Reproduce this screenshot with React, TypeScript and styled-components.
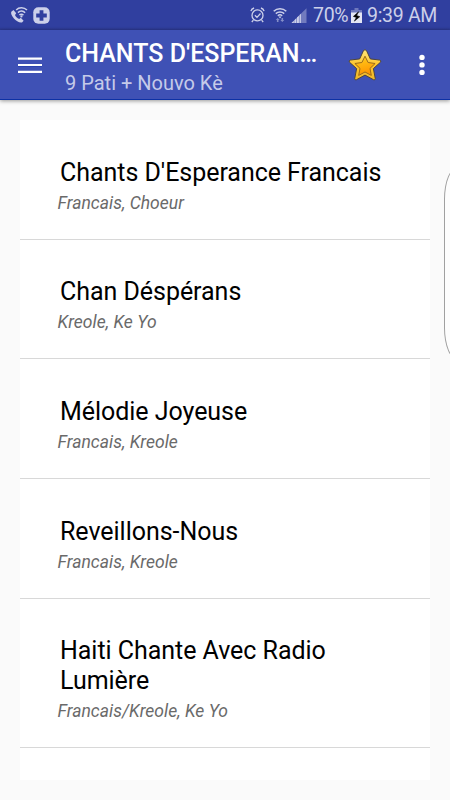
import React from 'react';
import styled, { createGlobalStyle } from 'styled-components';

const GlobalStyle = createGlobalStyle`
  * { box-sizing: border-box; }
  html, body { margin: 0; background: #fafafa; }
  body { font-family: Roboto, sans-serif; overflow: hidden; }
`;

const Screen = styled.div`
  position: relative;
  width: 450px;
  height: 800px;
  overflow: hidden;
  display: flex;
  flex-direction: column;
  background: #fafafa;
`;

const StatusBar = styled.div`
  flex: none;
  height: 30px;
  padding: 0 13px 0 10px;
  display: flex;
  align-items: center;
  justify-content: space-between;
  background: linear-gradient(#303f9f 27px, #2b388f 30px);
  color: #ccd0ea;
`;

const StatusGroup = styled.div<{ $gap: number }>`
  display: flex;
  align-items: center;
  gap: ${(p) => p.$gap}px;
  height: 30px;
  svg { display: block; flex: none; }
`;

const StatusText = styled.span<{ $width: number }>`
  width: ${(p) => p.$width}px;
  font-size: 19.5px;
  letter-spacing: -0.3px;
  line-height: 30px;
  padding-top: 2px;
  white-space: nowrap;
`;

const AppBar = styled.header`
  flex: none;
  height: 70px;
  padding-left: 18px;
  display: flex;
  align-items: center;
  background: #3f51b5;
  border-bottom: 1px solid #0d31a5;
  box-shadow: 0 1px 4px rgba(0, 0, 0, 0.4);
  svg { display: block; flex: none; }
`;

const Heading = styled.div`
  width: 254px;
  margin-left: 23px;
  padding-top: 7px;
`;

const Title = styled.h1`
  margin: 0;
  font-size: 25px;
  font-weight: 500;
  line-height: 30px;
  color: #fff;
  white-space: nowrap;
`;

const Subtitle = styled.div`
  font-size: 20px;
  line-height: 28px;
  color: #c5cae9;
`;

const IconButton = styled.button<{ $gap: number }>`
  margin: 0 0 0 ${(p) => p.$gap}px;
  padding: 1px 0 0;
  border: 0;
  background: none;
`;

const List = styled.main`
  flex: none;
  margin: 20px 20px 0;
  height: 660px;
  background: #fff;
  overflow: hidden;
`;

const Row = styled.section`
  padding: 37.6px 37.5px 24.2px;
  border-bottom: 1px solid #d8d8d8;
`;

const RowTitle = styled.h2`
  margin: 0 0 5.6px 2.5px;
  font-size: 25px;
  font-weight: 400;
  line-height: 29.4px;
  letter-spacing: -0.04px;
  color: #000;
`;

const RowDetail = styled.div`
  font-size: 17.5px;
  font-style: italic;
  line-height: 21.9px;
  letter-spacing: 0.03px;
  color: #6a6a6a;
`;

const EdgeHandle = styled.div`
  position: absolute;
  left: 444px;
  top: 167px;
  width: 30px;
  height: 193px;
  border: 1px solid #a0a0a0;
  border-radius: 14px / 32px;
  background: #fdfdfd;
`;

const collections = [
  { title: "Chants D'Esperance Francais", detail: 'Francais, Choeur' },
  { title: 'Chan Déspérans', detail: 'Kreole, Ke Yo' },
  { title: 'Mélodie Joyeuse', detail: 'Francais, Kreole' },
  { title: 'Reveillons-Nous', detail: 'Francais, Kreole' },
  { title: 'Haiti Chante Avec Radio Lumière', detail: 'Francais/Kreole, Ke Yo' },
];

const CallIcon = () => (
  <svg width="18" height="18" viewBox="0 0 18 18" fill="none" stroke="currentColor">
    <path d="M1.3 5.8 3.5 4.1 6.2 7.3 5 8.9C5.7 10.7 7 12 9.2 13L10.8 11.8 13.6 14.7 12 16.4C9.8 17.1 6 15.2 3.9 12.6 1.8 10 .5 7.4 1.3 5.8Z" fill="currentColor" stroke="none" />
    <path d="M6.2 3.9C9 .9 14 1 17 4M8 6.6c2.1-2.1 5.2-2 7.1.2M9.4 9c1.3-1.2 2.9-1.1 4 .2" strokeWidth="1.5" />
    <circle cx="11.4" cy="10.4" r="1.1" fill="currentColor" stroke="none" />
  </svg>
);

const PlusBadge = () => (
  <svg width="17" height="17" viewBox="0 0 17 17">
    <rect x=".3" y=".3" width="16.4" height="16.4" rx="5" fill="currentColor" />
    <path d="M6.6 3.2h3.8v3.4h3.4v3.8h-3.4v3.4H6.6v-3.4H3.2V6.6h3.4z" fill="#303f9f" />
  </svg>
);

const AlarmIcon = () => (
  <svg width="15" height="16" viewBox="0 0 15 16" fill="none" stroke="currentColor" strokeWidth="1.3">
    <circle cx="7.5" cy="8.4" r="5.5" />
    <path d="M.9 4.2C1.3 2.6 2.5 1.4 4.1 1M14.1 4.2C13.7 2.6 12.5 1.4 10.9 1M3.4 13.1 1.8 15M11.6 13.1l1.6 1.9M4.9 8.2l2.1 2.2 3.5-3.9" />
  </svg>
);

const WifiIcon = () => (
  <svg width="14" height="16" viewBox="0 0 14 16" fill="none" stroke="currentColor" strokeWidth="1.5">
    <path d="M.7 4.2c3.5-3.4 9.1-3.4 12.6 0M2.8 6.6c2.3-2.2 6.1-2.2 8.4 0M4.8 8.7c1.2-1.1 3.2-1.1 4.4 0" />
    <path d="m5.4 9.4 1.6 2 1.6-2z" fill="currentColor" stroke="none" />
    <path d="M4.7 11 2.7 13.1h1.2v2h1.6v-2h1.2zM9.3 15.1l2-2.1h-1.2v-2H8.5v2H7.3z" fill="currentColor" fillOpacity=".55" stroke="none" />
  </svg>
);

const SignalIcon = () => (
  <svg width="16" height="15" viewBox="0 0 16 15">
    <path d="M.5 15 15.5.3V15z" fill="currentColor" fillOpacity=".42" />
    <path d="M.5 15 2.8 12.8V15zM3.4 15v-2.8l1.9-1.9V15zM6 15V9.6l1.9-1.9V15zM8.6 15V7l1.3-1.3V15z" fill="currentColor" />
  </svg>
);

const BatteryIcon = () => (
  <svg width="11" height="15" viewBox="0 0 11 15">
    <path d="M3.5 0h4v2H11v3H0V2h3.5z" fill="currentColor" fillOpacity=".4" />
    <path d="M0 4.5h11V15H0z" fill="#e4e6f4" />
    <path d="M7.6 3.8 2.4 8.4l3 1-2 3.7 5.4-4.4-3.2-1.2z" fill="#000" stroke="#000" strokeWidth=".6" />
  </svg>
);

const MenuIcon = () => (
  <svg width="24" height="17" viewBox="0 0 24 17">
    <path d="M0 .5h24v2.3H0zM0 7h24v2.3H0zM0 13.8h24v2.3H0z" fill="#fff" />
    <path d="M0 9.3h24v.7H0z" fill="#102ba4" />
  </svg>
);

const StarIcon = () => (
  <svg width="34" height="34" viewBox="0 0 34 34">
    <defs>
      <linearGradient id="starRim" x1="0" y1="0" x2="0" y2="1">
        <stop offset="0" stopColor="#ffe57a" />
        <stop offset=".5" stopColor="#ffc52c" />
        <stop offset="1" stopColor="#eeb72b" />
      </linearGradient>
      <linearGradient id="starFill" x1="0" y1="0" x2=".25" y2="1">
        <stop offset="0" stopColor="#ffd21e" />
        <stop offset="1" stopColor="#ff9500" />
      </linearGradient>
    </defs>
    <path d="M17 1.8Q18 1.7 18.7 3L22.3 10.9 31.9 12.1Q33.7 12.9 32.4 14.3L25.4 20.6 27.3 30.7Q27.2 32.4 25.5 31.7L17 27.1 8.5 31.7Q6.8 32.4 6.7 30.7L8.6 20.6 1.6 14.3Q.3 12.9 2.1 12.1L11.7 10.9 15.3 3Q16 1.7 17 1.8Z" fill="url(#starRim)" stroke="#4d443e" strokeWidth="1" />
    <path d="m17 8.2 3.1 6.3 7 1-5.1 4.9 1.3 7-6.3-3.4-6.3 3.4 1.3-7-5.1-4.9 7-1z" fill="url(#starFill)" stroke="#9a6a1d" strokeWidth="1" strokeLinejoin="round" />
  </svg>
);

const MoreIcon = () => (
  <svg width="6" height="22" viewBox="0 0 6 22" fill="#fff">
    <circle cx="3" cy="3.4" r="2.7" />
    <circle cx="3" cy="10.9" r="2.7" />
    <circle cx="3" cy="18.4" r="2.7" />
  </svg>
);

export default function App() {
  return (
    <>
      <GlobalStyle />
      <Screen>
        <StatusBar>
          <StatusGroup $gap={5}>
            <CallIcon />
            <PlusBadge />
          </StatusGroup>
          <StatusGroup $gap={4}>
            <StatusGroup $gap={8}>
              <AlarmIcon />
              <WifiIcon />
            </StatusGroup>
            <StatusGroup $gap={6}>
              <SignalIcon />
              <StatusText $width={34}>70%</StatusText>
            </StatusGroup>
            <StatusGroup $gap={5}>
              <BatteryIcon />
              <StatusText $width={70}>9:39 AM</StatusText>
            </StatusGroup>
          </StatusGroup>
        </StatusBar>
        <AppBar>
          <IconButton $gap={0} aria-label="Menu">
            <MenuIcon />
          </IconButton>
          <Heading>
            <Title>CHANTS D'ESPERAN…</Title>
            <Subtitle>9 Pati + Nouvo Kè</Subtitle>
          </Heading>
          <IconButton $gap={29} aria-label="Favorites">
            <StarIcon />
          </IconButton>
          <IconButton $gap={37} aria-label="More options">
            <MoreIcon />
          </IconButton>
        </AppBar>
        <List>
          {collections.map((c) => (
            <Row key={c.title}>
              <RowTitle>{c.title}</RowTitle>
              <RowDetail>{c.detail}</RowDetail>
            </Row>
          ))}
        </List>
        <EdgeHandle />
      </Screen>
    </>
  );
}
